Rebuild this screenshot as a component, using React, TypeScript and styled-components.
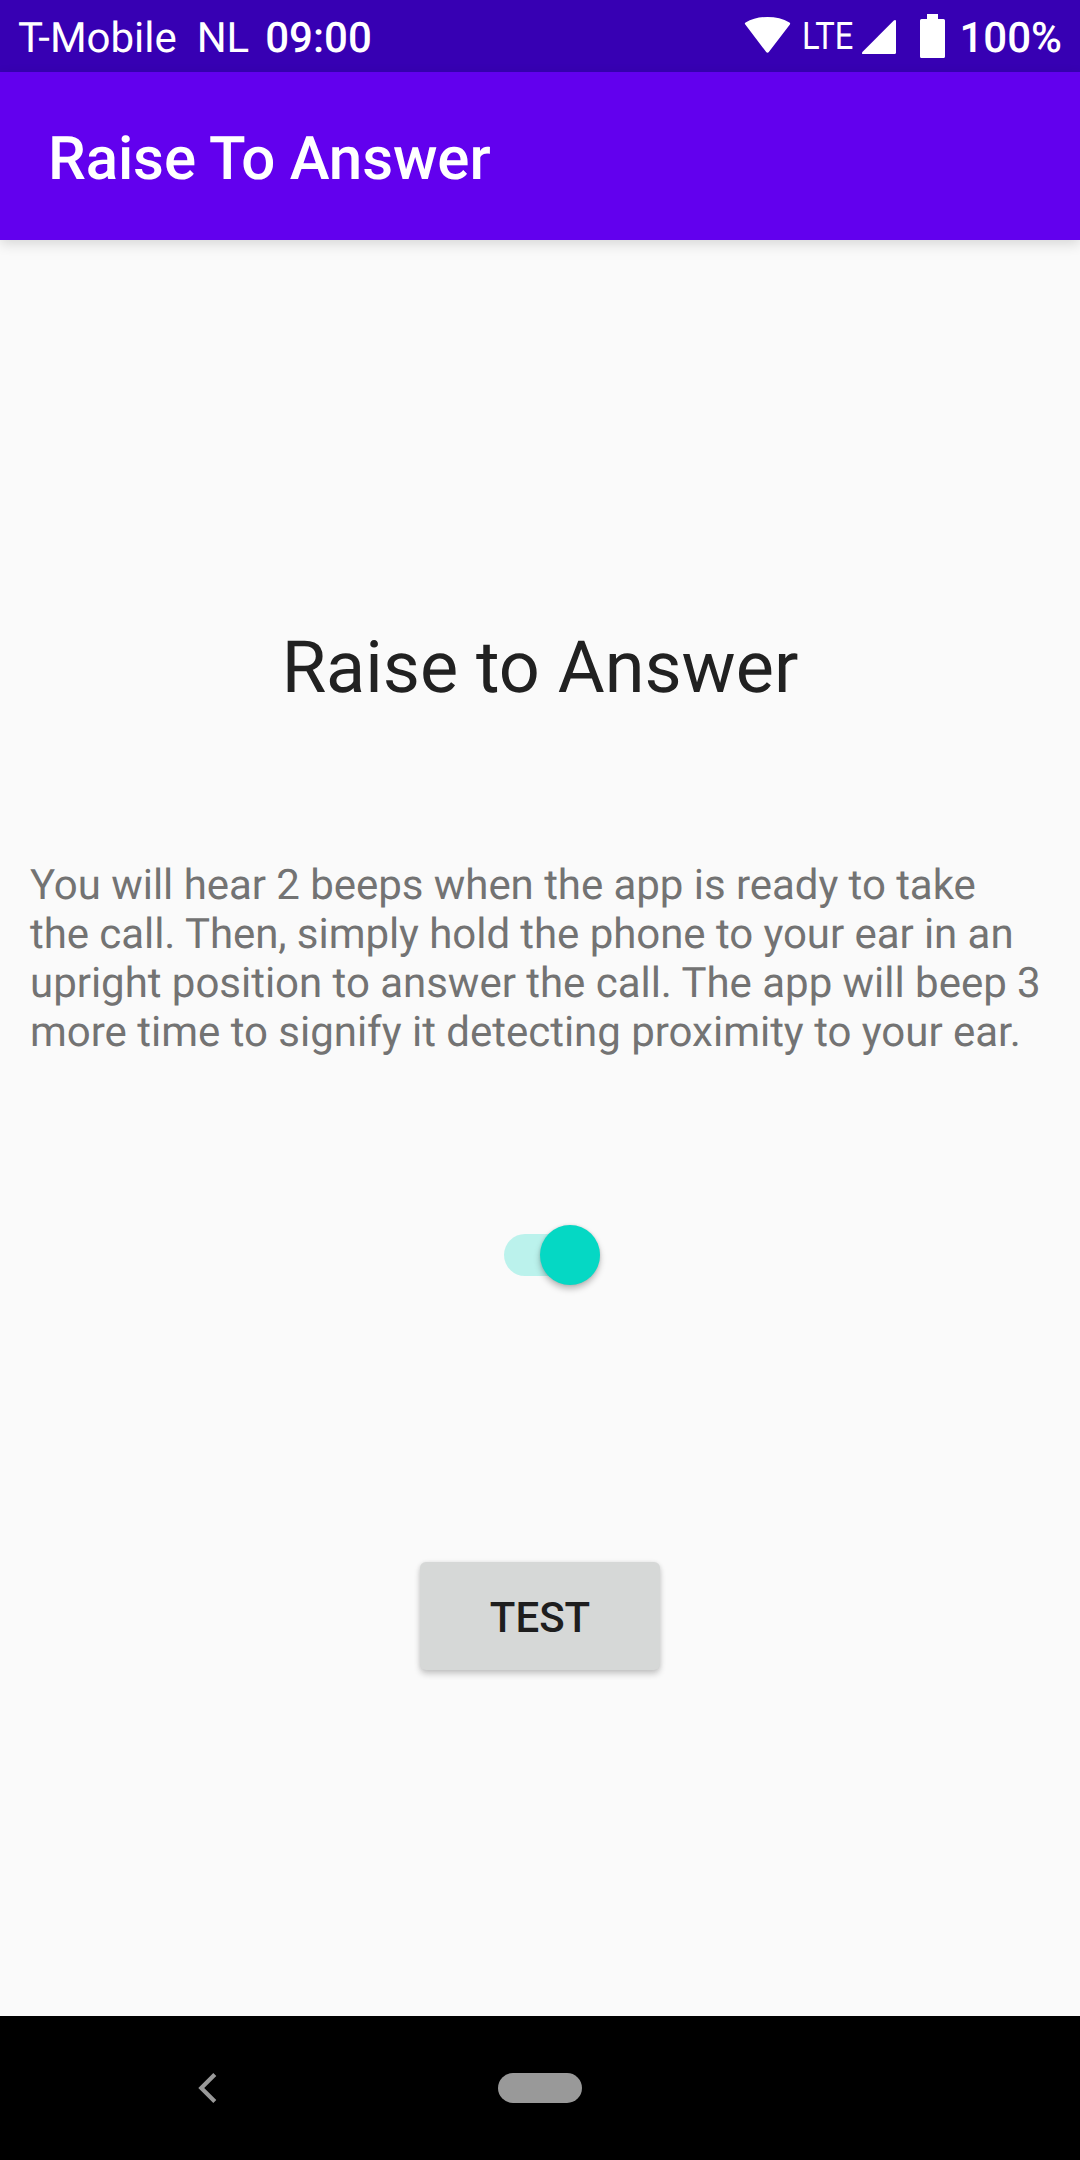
import React, { useState } from 'react';
import styled, { createGlobalStyle } from 'styled-components';

const GlobalStyle = createGlobalStyle`
  *, *::before, *::after { box-sizing: border-box; }
  body {
    margin: 0;
    background: #fafafa;
    font-family: Roboto, "Liberation Sans", sans-serif;
    text-rendering: geometricPrecision;
  }
`;

const Screen = styled.div`
  display: flex;
  flex-direction: column;
  width: 1080px;
  height: 2160px;
  overflow: hidden;
  background: #fafafa;
`;

const StatusBar = styled.header`
  display: flex;
  flex: none;
  align-items: flex-start;
  justify-content: space-between;
  height: 72px;
  padding: 14px 18px 0;
  background: #3700b3;
  color: #fff;
  font-size: 42px;
  line-height: 50px;
  white-space: pre;
`;

const StatusGroup = styled.div`
  display: flex;
`;

const Carrier = styled.span`
  margin-right: 16px;
  word-spacing: -0.5px;
`;

const Strong = styled.span`
  font-weight: 500;
`;

const StatusIcons = styled.svg`
  display: block;
  margin-top: -14px;
  fill: #fff;
`;

const NetworkType = styled.span`
  width: 58px;
  padding-left: 9px;
  font-size: 38px;
  line-height: 46px;
  transform: scaleX(0.86);
  transform-origin: 9px 0;
`;

const AppBar = styled.div`
  display: flex;
  flex: none;
  align-items: center;
  height: 168px;
  padding: 6px 0 0 48px;
  background: #6200ee;
  box-shadow: 0 4px 12px rgba(0, 0, 0, 0.14);
`;

const AppTitle = styled.div`
  color: #fff;
  font-size: 60px;
  font-weight: 500;
  line-height: 70px;
  letter-spacing: -0.1px;
  word-spacing: -0.4px;
`;

const Content = styled.main`
  display: flex;
  flex: 1;
  flex-direction: column;
  align-items: center;
  padding: 386px 30px 0;
`;

const Heading = styled.h1`
  margin: 0;
  color: #212121;
  font-size: 72px;
  font-weight: 400;
  line-height: 84px;
`;

const Description = styled.p`
  width: 1020px;
  margin: 151px 0 0;
  color: #737373;
  font-size: 42px;
  line-height: 49px;
`;

const Line = styled.span<{ $tracking: number }>`
  display: block;
  letter-spacing: ${(p) => p.$tracking}px;
`;

const Toggle = styled.button<{ $on: boolean }>`
  display: flex;
  align-items: center;
  justify-content: ${(p) => (p.$on ? 'flex-end' : 'flex-start')};
  width: 96px;
  height: 42px;
  margin: 177px 0 0 24px;
  padding: 0;
  border: 0;
  border-radius: 21px;
  background: ${(p) => (p.$on ? '#bbf2ec' : '#b9b9b9')};
`;

const Thumb = styled.span<{ $on: boolean }>`
  flex: none;
  width: 60px;
  height: 60px;
  margin: 0.8px 0.5px 0;
  border-radius: 50%;
  background: ${(p) => (p.$on ? '#05d8c4' : '#ececec')};
  box-shadow: 0 4px 6px rgba(0, 0, 0, 0.25), 0 0 3px rgba(0, 0, 0, 0.12);
`;

const TestButton = styled.button`
  width: 240px;
  height: 108px;
  margin: 286px 0 0;
  padding: 4px 0 0;
  border: 0;
  border-radius: 6px;
  background: #d6d8d7;
  box-shadow: 0 4px 6px rgba(0, 0, 0, 0.2), 0 0 4px rgba(0, 0, 0, 0.08);
  color: #1e1e1e;
  font-family: inherit;
  font-size: 42px;
  font-weight: 500;
  line-height: 50px;
`;

const NavBar = styled.nav`
  display: flex;
  flex: none;
  align-items: center;
  height: 144px;
  padding-left: 198px;
  background: #000;
`;

const BackIcon = styled.svg`
  display: block;
  fill: #999;
`;

const HomePill = styled.span`
  width: 84px;
  height: 30px;
  margin-left: 281px;
  border-radius: 15px;
  background: #999;
`;

const description = [
  { text: 'You will hear 2 beeps when the app is ready to take', tracking: -0.045 },
  { text: 'the call. Then, simply hold the phone to your ear in an', tracking: -0.06 },
  { text: 'upright position to answer the call. The app will beep 3', tracking: -0.025 },
  { text: 'more time to signify it detecting proximity to your ear.', tracking: -0.015 },
];

export default function App() {
  const [enabled, setEnabled] = useState(true);
  return (
    <Screen>
      <GlobalStyle />
      <StatusBar>
        <StatusGroup>
          <Carrier>T-Mobile  NL</Carrier>
          <Strong>09:00</Strong>
        </StatusGroup>
        <StatusGroup>
          <StatusIcons width="50" height="72" viewBox="743 0 50 72">
            <path d="M745.3 24.5Q744.2 23.4 745.6 22.4Q755 17 767.5 17T789.4 22.4Q790.8 23.4 789.7 24.7L769 51.8Q767.5 53.8 766 51.8Z" />
          </StatusIcons>
          <NetworkType>LTE</NetworkType>
          <StatusIcons width="108" height="72" viewBox="851 0 108 72">
            <path d="M896 21.5V52.5Q896 54 894.5 54H863.2Q861.2 54 862.4 52L893.8 20.5Q896 19.2 896 21.5Z" />
            <path d="M927 14H938V19H943.5Q945 19 945 20.5V56.5Q945 58 943.5 58H921.5Q920 58 920 56.5V20.5Q920 19 921.5 19H927Z" />
          </StatusIcons>
          <Strong>100%</Strong>
        </StatusGroup>
      </StatusBar>
      <AppBar>
        <AppTitle>Raise To Answer</AppTitle>
      </AppBar>
      <Content>
        <Heading>Raise to Answer</Heading>
        <Description>
          {description.map((line) => (
            <Line key={line.text} $tracking={line.tracking}>
              {line.text}
            </Line>
          ))}
        </Description>
        <Toggle
          $on={enabled}
          role="switch"
          aria-checked={enabled}
          onClick={() => setEnabled(!enabled)}
        >
          <Thumb $on={enabled} />
        </Toggle>
        <TestButton>TEST</TestButton>
      </Content>
      <NavBar>
        <BackIcon width="19" height="30" viewBox="0 0 19 30">
          <path d="M15.3 0L18.3 2.9L6.2 15L18.3 27.1L15.3 30L.3 15Z" />
        </BackIcon>
        <HomePill />
      </NavBar>
    </Screen>
  );
}
